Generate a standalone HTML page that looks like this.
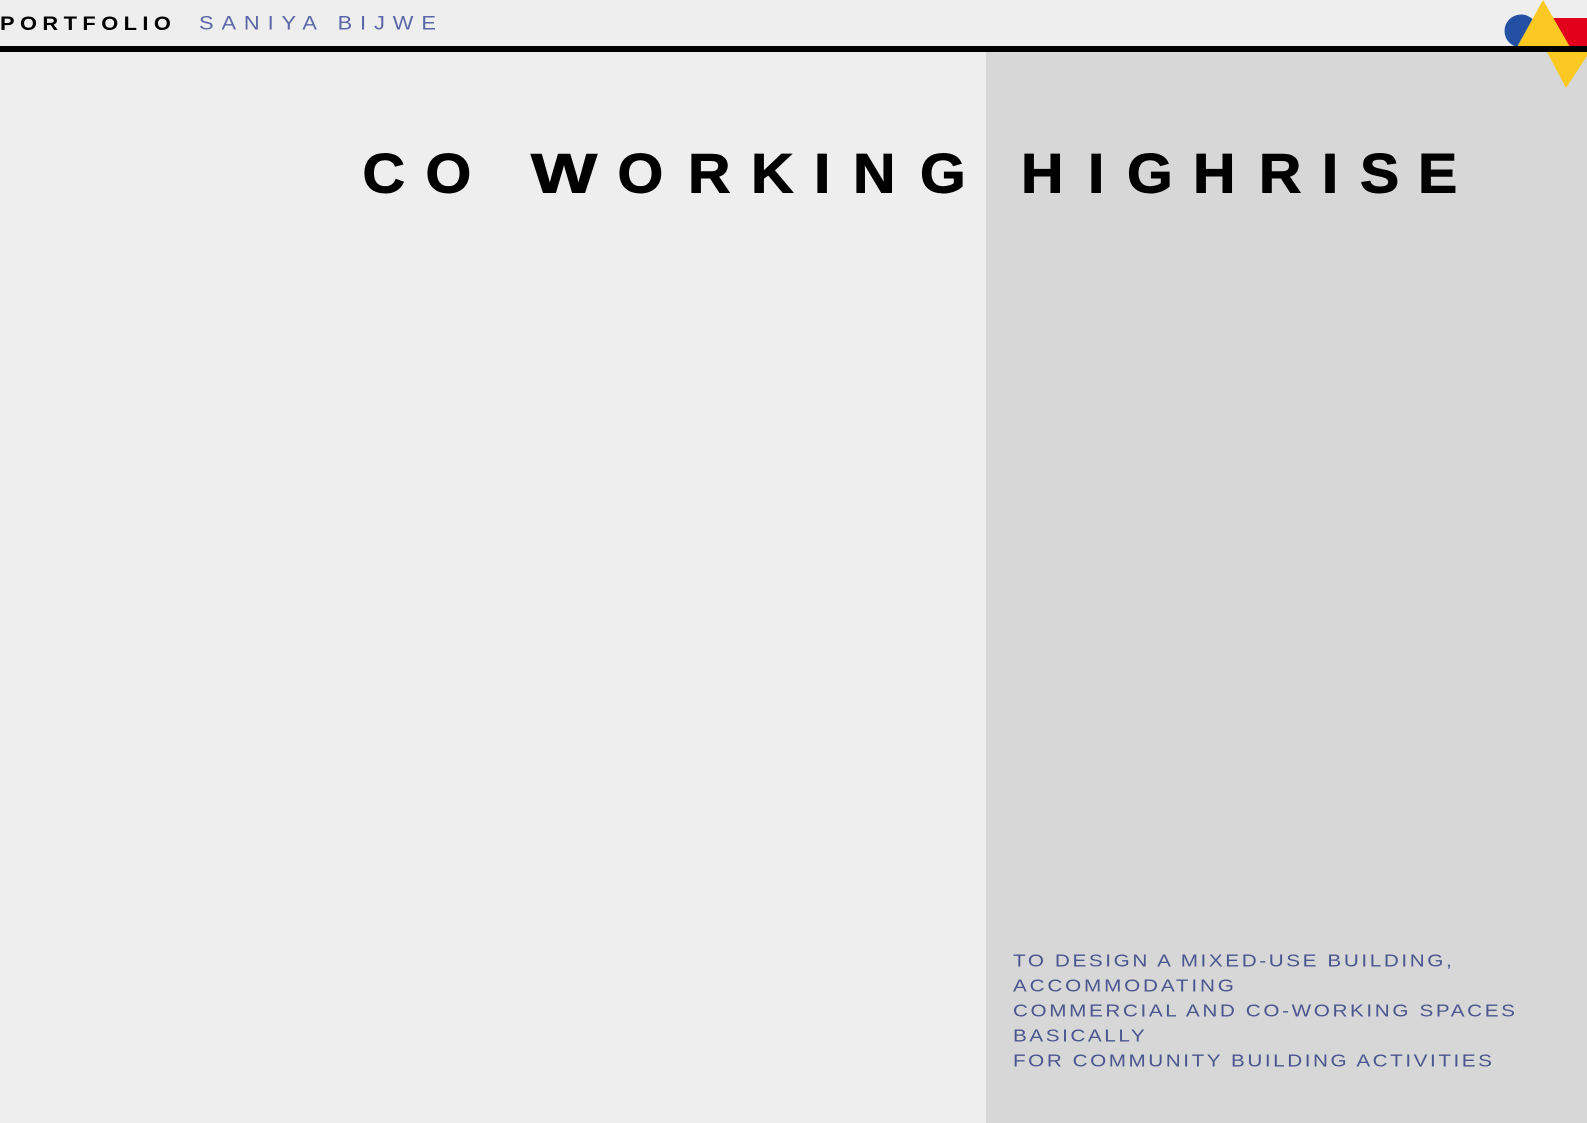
<!DOCTYPE html>
<html lang="en">
<head>
<meta charset="utf-8">
<title>Portfolio - Saniya Bijwe</title>
<style>
html,body{margin:0;padding:0;background:#eeeeee;width:1587px;height:1123px;overflow:hidden}
svg{display:block;position:absolute;left:0;top:0}
text{font-family:"Liberation Sans",Arial,sans-serif}
</style>
</head>
<body>
<svg width="1587" height="1123" viewBox="0 0 1587 1123" xmlns="http://www.w3.org/2000/svg">
  <rect x="0" y="0" width="1587" height="1123" fill="#eeeeee"/>
  <rect x="986" y="52" width="601" height="1071" fill="#d7d7d7"/>

  <g transform="scale(1.15,1)">
    <text x="0" y="30" font-size="19" font-weight="700" fill="#000" textLength="148.6" lengthAdjust="spacing">PORTFOLIO</text>
  </g>
  <g transform="translate(199,0) scale(1.15,1)">
    <text x="0" y="29.5" font-size="19" fill="#5a66a8" textLength="206" lengthAdjust="spacing">SANIYA BIJWE</text>
  </g>

  <circle cx="1521" cy="31" r="16.5" fill="#2450a4"/>
  <rect x="1550" y="18" width="37" height="29" fill="#e2001a"/>
  <polygon points="1543,0 1517,47 1570,47" fill="#fcc922"/>
  <rect x="0" y="46" width="1587" height="6" fill="#000"/>
  <polygon points="1547,52 1587,52 1587,56 1566,88" fill="#fcc922"/>

  <g font-size="56" font-weight="700" fill="#000" stroke="#000" stroke-width="1">
    <g transform="scale(1.05,1)">
      <text y="192.5" x="345.2 405.2 470">CO </text>
      <text y="192.5" x="588.1 655.2 715.2 775.2 812.4 876.2 952.4 972.4 1036.2 1073.3 1136.2 1199 1259 1295.2 1350.5">ORKING HIGHRISE</text>
    </g>
    <g transform="translate(531,0) scale(1.25,1)">
      <text y="192.5" x="0">W</text>
    </g>
  </g>

  <g transform="translate(1013,0) scale(1.15,1)" font-size="18" fill="#4a568f">
    <text x="0" y="966.5" textLength="381.5" lengthAdjust="spacing">TO DESIGN A MIXED-USE BUILDING,</text>
    <text x="0" y="991.5" textLength="192" lengthAdjust="spacing">ACCOMMODATING</text>
    <text x="0" y="1016.5" textLength="436.5" lengthAdjust="spacing">COMMERCIAL AND CO-WORKING SPACES</text>
    <text x="0" y="1041.5" textLength="114.5" lengthAdjust="spacing">BASICALLY</text>
    <text x="0" y="1066.5" textLength="416.5" lengthAdjust="spacing">FOR COMMUNITY BUILDING ACTIVITIES</text>
  </g>
</svg>
</body>
</html>
